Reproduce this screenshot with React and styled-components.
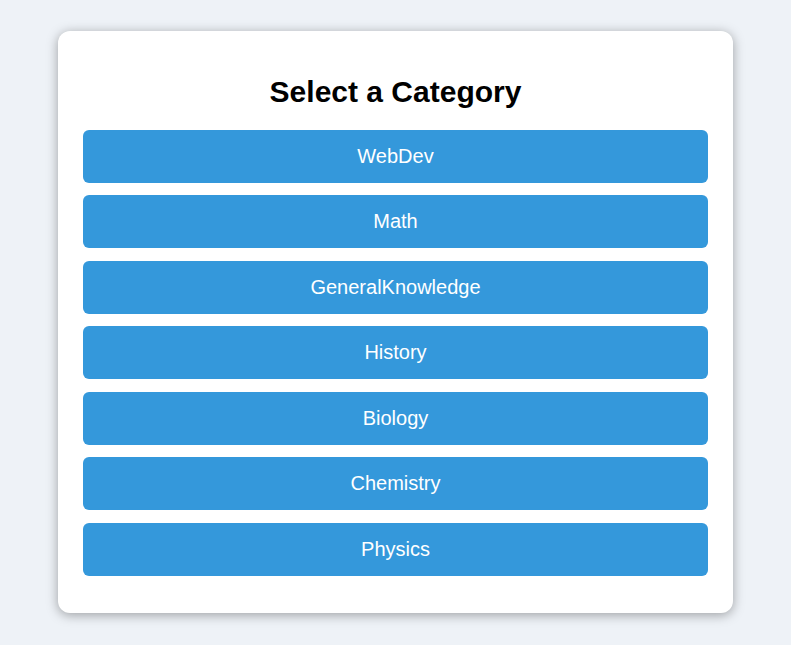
import React from "react";
import styled, { createGlobalStyle } from "styled-components";

const Global = createGlobalStyle`
  html, body { margin: 0; padding: 0; }
  body {
    background: #eef2f7;
    font-family: "Liberation Sans", Arial, sans-serif;
  }
`;

const Page = styled.div`
  display: flex;
  justify-content: center;
  padding: 31px 0;
`;

const Card = styled.div`
  width: 675px;
  box-sizing: border-box;
  background: #ffffff;
  border-radius: 12px;
  padding: 20px 25px 25px;
  box-shadow: 0 2px 12px rgba(0, 0, 0, 0.35);
  display: flex;
  flex-direction: column;
`;

const Title = styled.h2`
  margin: 23.5px 0 21px;
  font-size: 30px;
  line-height: 34px;
  font-weight: bold;
  text-align: center;
  color: #000;
`;

const CategoryButton = styled.button`
  height: 53px;
  margin-bottom: 12.5px;
  border: none;
  border-radius: 6px;
  background: #3498db;
  color: #ffffff;
  font-family: "Liberation Sans", Arial, sans-serif;
  font-size: 20px;
  display: flex;
  align-items: center;
  justify-content: center;
  cursor: pointer;
  padding: 0;
`;

const categories = [
  "WebDev",
  "Math",
  "GeneralKnowledge",
  "History",
  "Biology",
  "Chemistry",
  "Physics",
];

export default function App() {
  return (
    <>
      <Global />
      <Page>
        <Card>
          <Title>Select a Category</Title>
          {categories.map((c) => (
            <CategoryButton key={c}>{c}</CategoryButton>
          ))}
        </Card>
      </Page>
    </>
  );
}
